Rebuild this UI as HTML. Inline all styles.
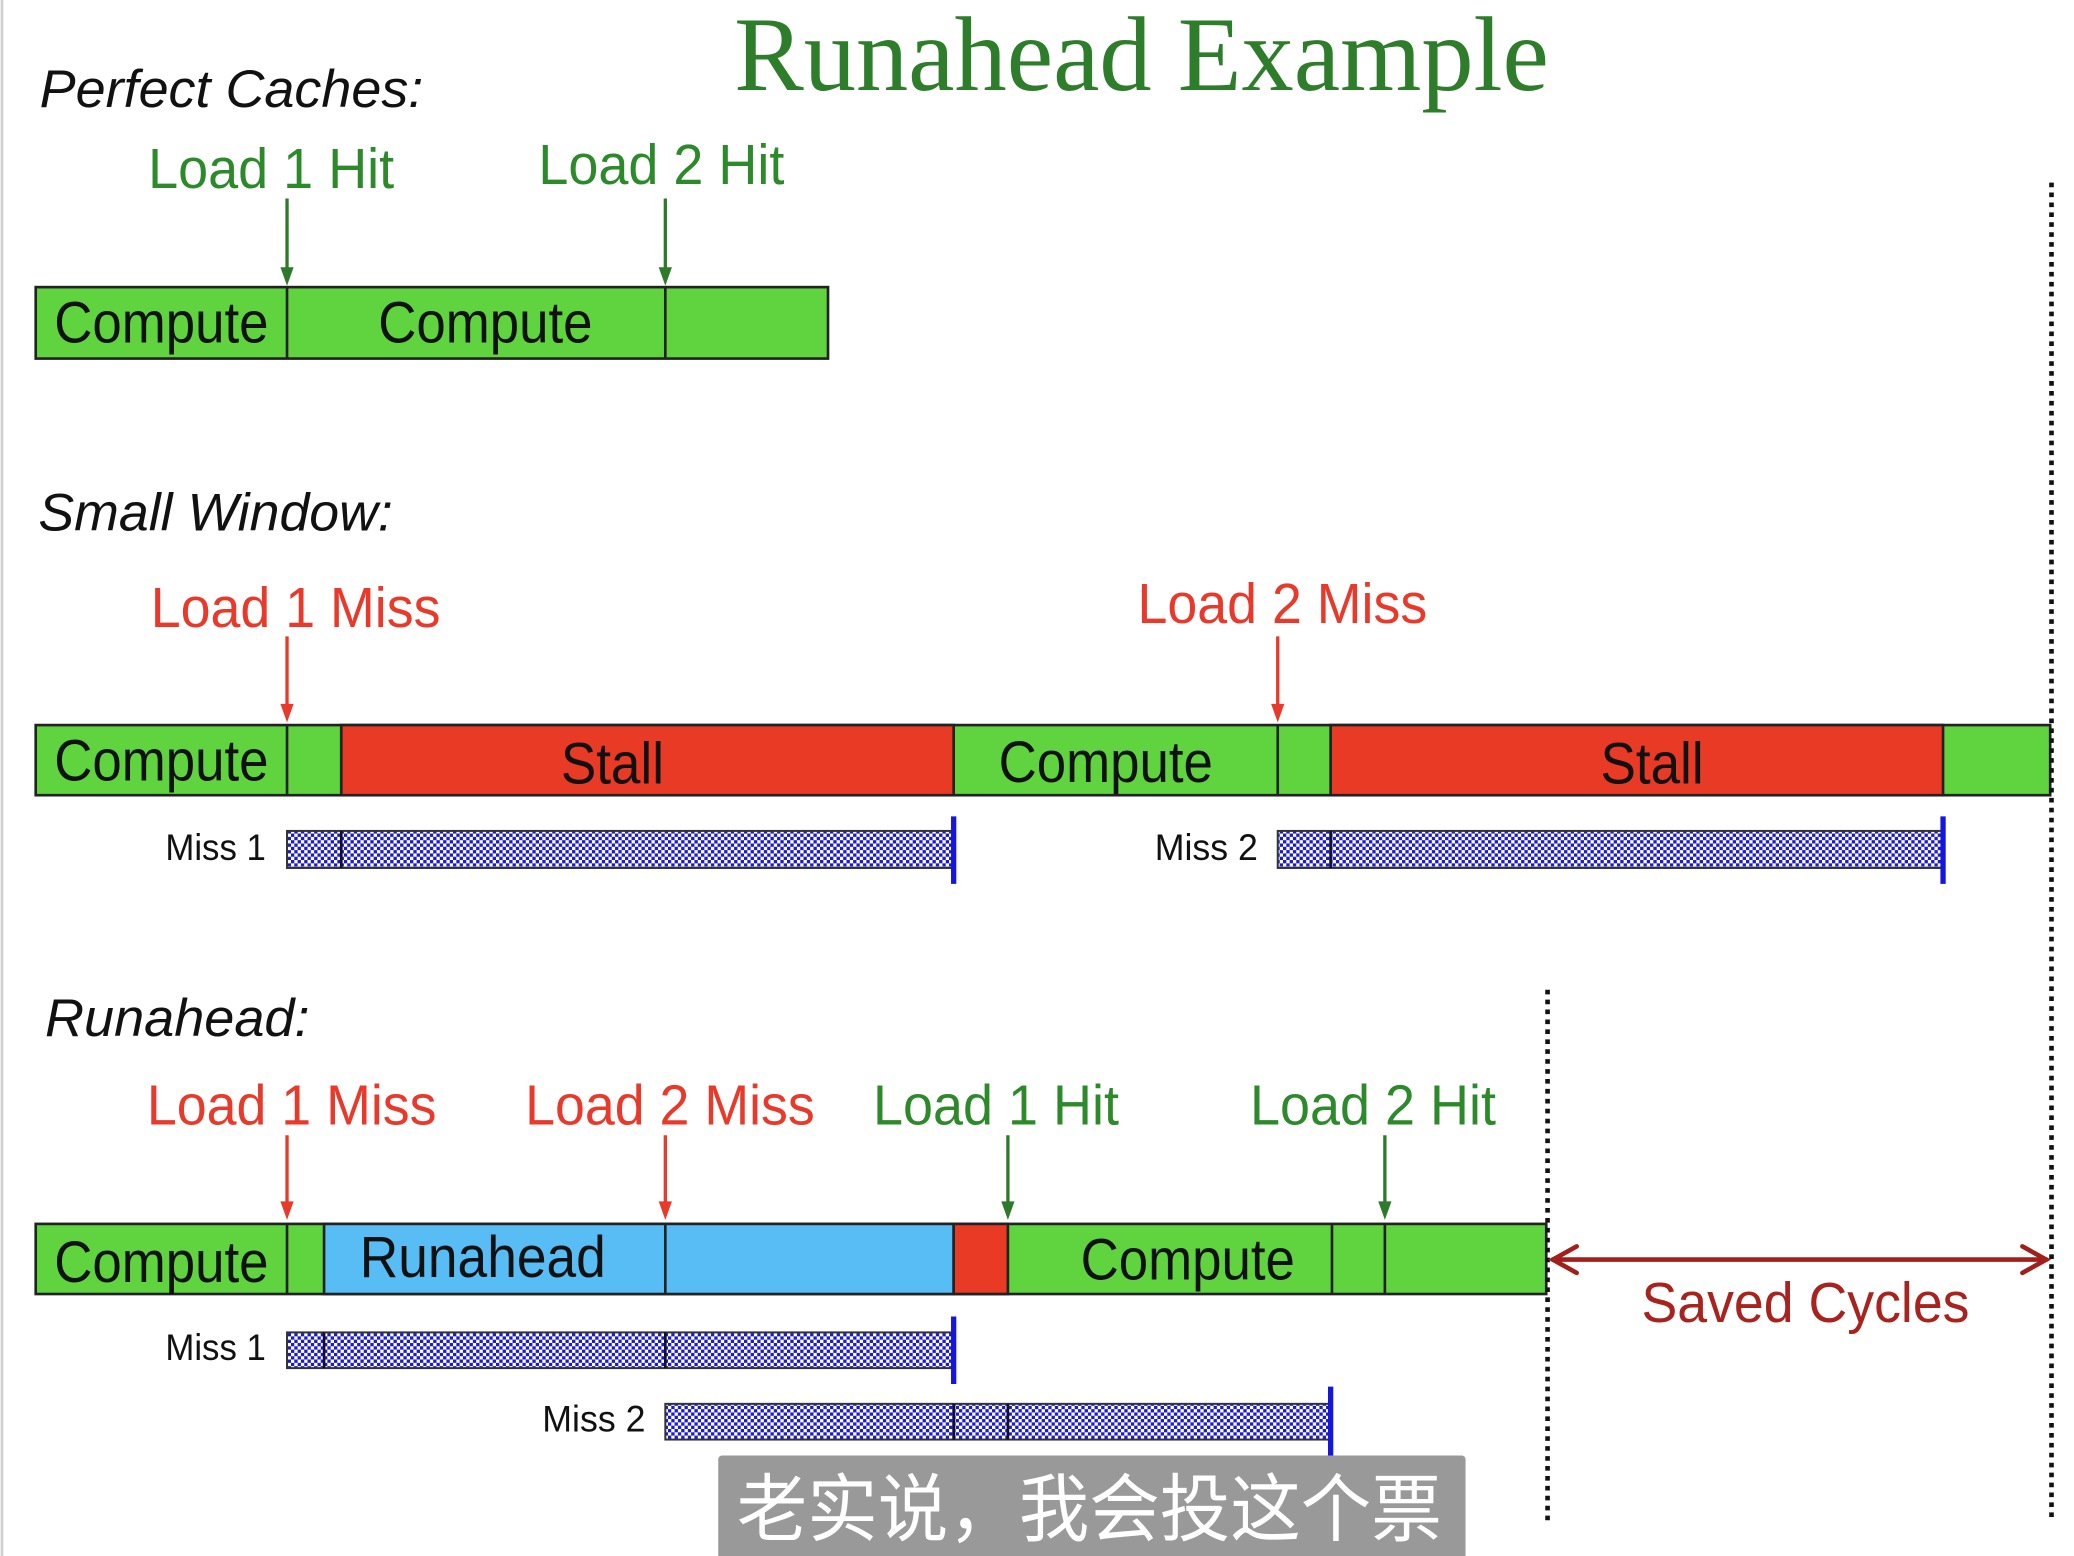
<!DOCTYPE html>
<html><head><meta charset="utf-8"><style>
html,body{margin:0;padding:0;background:#fff;width:2074px;height:1556px;overflow:hidden}
svg{display:block}
.s{font-family:"Liberation Sans",Arial,sans-serif}
.i{font-family:"Liberation Sans",Arial,sans-serif;font-style:italic;font-size:40px;fill:#111}
.g{fill:#2d8a2a;font-size:43px}
.r{fill:#e8392a;font-size:43px}
.b{fill:#111;font-size:44px}
.m{fill:#111;font-size:28px}
</style></head><body>
<svg width="2074" height="1556" viewBox="0 0 1568 1176" preserveAspectRatio="none" xmlns="http://www.w3.org/2000/svg">
<defs>
<pattern id="h" width="5" height="5" patternUnits="userSpaceOnUse">
<rect width="5" height="5" fill="#fff"/><rect width="2.5" height="2.5" fill="#1a1ad0"/><rect x="2.5" y="2.5" width="2.5" height="2.5" fill="#1a1ad0"/>
</pattern>
</defs>
<line x1="1.5" y1="0" x2="1.5" y2="1176" stroke="#cfcfcf" stroke-width="2"/>
<text x="555" y="68" font-family="'Liberation Serif',serif" font-size="80" fill="#2e7d2a" textLength="616" lengthAdjust="spacingAndGlyphs">Runahead Example</text>

<g class="s">
<text class="i" x="30" y="81" textLength="290" lengthAdjust="spacingAndGlyphs">Perfect Caches:</text>
<text class="g" x="112" y="142" textLength="186" lengthAdjust="spacingAndGlyphs">Load 1 Hit</text>
<text class="g" x="407" y="139" textLength="186" lengthAdjust="spacingAndGlyphs">Load 2 Hit</text>
</g>
<g stroke="#2d7a2a" stroke-width="2.5"><line x1="217" y1="150" x2="217" y2="206"/><line x1="503" y1="150" x2="503" y2="206"/></g>
<path d="M212,202 L222,202 L217,216 Z M498,202 L508,202 L503,216 Z" fill="#2d7a2a"/>
<rect x="27" y="217" width="599" height="54" fill="#5fd43f" stroke="#222" stroke-width="2"/>
<g stroke="#222" stroke-width="2"><line x1="217" y1="217" x2="217" y2="271"/><line x1="503" y1="217" x2="503" y2="271"/></g>
<g class="s b" text-anchor="middle">
<text x="122" y="259" textLength="162" lengthAdjust="spacingAndGlyphs">Compute</text>
<text x="367" y="259" textLength="162" lengthAdjust="spacingAndGlyphs">Compute</text>
</g>

<g class="s">
<text class="i" x="29" y="401" textLength="268" lengthAdjust="spacingAndGlyphs">Small Window:</text>
<text class="r" x="114" y="474" textLength="219" lengthAdjust="spacingAndGlyphs">Load 1 Miss</text>
<text class="r" x="860" y="471" textLength="219" lengthAdjust="spacingAndGlyphs">Load 2 Miss</text>
</g>
<g stroke="#e8392a" stroke-width="2.5"><line x1="217" y1="481" x2="217" y2="536"/><line x1="966" y1="481" x2="966" y2="536"/></g>
<path d="M212,532 L222,532 L217,546 Z M961,532 L971,532 L966,546 Z" fill="#e8392a"/>
<rect x="27" y="548" width="1523" height="53" fill="#5fd43f" stroke="#222" stroke-width="2"/>
<rect x="258" y="548" width="463" height="53" fill="#e83a24" stroke="#222" stroke-width="2"/>
<rect x="1006" y="548" width="463" height="53" fill="#e83a24" stroke="#222" stroke-width="2"/>
<g stroke="#222" stroke-width="2"><line x1="217" y1="548" x2="217" y2="601"/><line x1="966" y1="548" x2="966" y2="601"/></g>
<g class="s b" text-anchor="middle">
<text x="122" y="590" textLength="162" lengthAdjust="spacingAndGlyphs">Compute</text>
<text x="463" y="592" textLength="78" lengthAdjust="spacingAndGlyphs">Stall</text>
<text x="836" y="591" textLength="162" lengthAdjust="spacingAndGlyphs">Compute</text>
<text x="1249" y="592" textLength="78" lengthAdjust="spacingAndGlyphs">Stall</text>
</g>
<g class="s m"><text x="125" y="650" textLength="76" lengthAdjust="spacingAndGlyphs">Miss 1</text><text x="873" y="650" textLength="78" lengthAdjust="spacingAndGlyphs">Miss 2</text></g>
<rect x="217" y="628" width="504" height="28" fill="url(#h)" stroke="#333" stroke-width="1.5"/>
<rect x="966" y="628" width="503" height="28" fill="url(#h)" stroke="#333" stroke-width="1.5"/>
<g stroke="#112" stroke-width="2"><line x1="258" y1="628" x2="258" y2="656"/><line x1="1006" y1="628" x2="1006" y2="656"/></g>
<g stroke="#1515e0" stroke-width="4"><line x1="721" y1="617" x2="721" y2="668"/><line x1="1469" y1="617" x2="1469" y2="668"/></g>

<g class="s">
<text class="i" x="34" y="783" textLength="200" lengthAdjust="spacingAndGlyphs">Runahead:</text>
<text class="r" x="111" y="850" textLength="219" lengthAdjust="spacingAndGlyphs">Load 1 Miss</text>
<text class="r" x="397" y="850" textLength="219" lengthAdjust="spacingAndGlyphs">Load 2 Miss</text>
<text class="g" x="660" y="850" textLength="186" lengthAdjust="spacingAndGlyphs">Load 1 Hit</text>
<text class="g" x="945" y="850" textLength="186" lengthAdjust="spacingAndGlyphs">Load 2 Hit</text>
</g>
<g stroke-width="2.5"><line x1="217" y1="858" x2="217" y2="912" stroke="#e8392a"/><line x1="503" y1="858" x2="503" y2="912" stroke="#e8392a"/><line x1="762" y1="858" x2="762" y2="912" stroke="#2d7a2a"/><line x1="1047" y1="858" x2="1047" y2="912" stroke="#2d7a2a"/></g>
<path d="M212,908 L222,908 L217,922 Z M498,908 L508,908 L503,922 Z" fill="#e8392a"/>
<path d="M757,908 L767,908 L762,922 Z M1042,908 L1052,908 L1047,922 Z" fill="#2d7a2a"/>
<rect x="27" y="925" width="1142" height="53" fill="#5fd43f" stroke="#222" stroke-width="2"/>
<rect x="245" y="925" width="476" height="53" fill="#58bdf5" stroke="#222" stroke-width="2"/>
<rect x="721" y="925" width="41" height="53" fill="#e83a24" stroke="#222" stroke-width="2"/>
<g stroke="#222" stroke-width="2"><line x1="217" y1="925" x2="217" y2="978"/><line x1="503" y1="925" x2="503" y2="978"/><line x1="1007" y1="925" x2="1007" y2="978"/><line x1="1047" y1="925" x2="1047" y2="978"/></g>
<g class="s b" text-anchor="middle">
<text x="122" y="969" textLength="162" lengthAdjust="spacingAndGlyphs">Compute</text>
<text x="365" y="965" textLength="186" lengthAdjust="spacingAndGlyphs">Runahead</text>
<text x="898" y="967" textLength="162" lengthAdjust="spacingAndGlyphs">Compute</text>
</g>
<g class="s m"><text x="125" y="1028" textLength="76" lengthAdjust="spacingAndGlyphs">Miss 1</text><text x="410" y="1082" textLength="78" lengthAdjust="spacingAndGlyphs">Miss 2</text></g>
<rect x="217" y="1007" width="504" height="27" fill="url(#h)" stroke="#333" stroke-width="1.5"/>
<rect x="503" y="1061" width="503" height="27" fill="url(#h)" stroke="#333" stroke-width="1.5"/>
<g stroke="#112" stroke-width="2"><line x1="245" y1="1007" x2="245" y2="1034"/><line x1="503" y1="1007" x2="503" y2="1034"/><line x1="721" y1="1061" x2="721" y2="1088"/><line x1="762" y1="1061" x2="762" y2="1088"/></g>
<g stroke="#1515e0" stroke-width="4"><line x1="721" y1="995" x2="721" y2="1046"/><line x1="1006" y1="1048" x2="1006" y2="1100"/></g>

<g stroke="#111" stroke-width="3.5" stroke-dasharray="3.5 4"><line x1="1170" y1="748" x2="1170" y2="1150"/><line x1="1551" y1="138" x2="1551" y2="1150"/></g>
<g stroke="#a1201c" stroke-width="3.5" fill="none" stroke-linecap="round"><line x1="1174" y1="952" x2="1547" y2="952"/><path d="M1192,942 L1174,952 L1192,962"/><path d="M1529,942 L1547,952 L1529,962"/></g>
<text class="s" x="1241" y="999" font-size="43" fill="#a8221e" textLength="248" lengthAdjust="spacingAndGlyphs">Saved Cycles</text>

<rect x="543" y="1100" width="565" height="80" fill="#999" rx="3"/>
<text x="557" y="1160" font-family="'Liberation Sans','Noto Sans CJK SC',sans-serif" font-size="56" fill="#fff" textLength="533" lengthAdjust="spacingAndGlyphs">老实说，我会投这个票</text>
</svg>
</body></html>
